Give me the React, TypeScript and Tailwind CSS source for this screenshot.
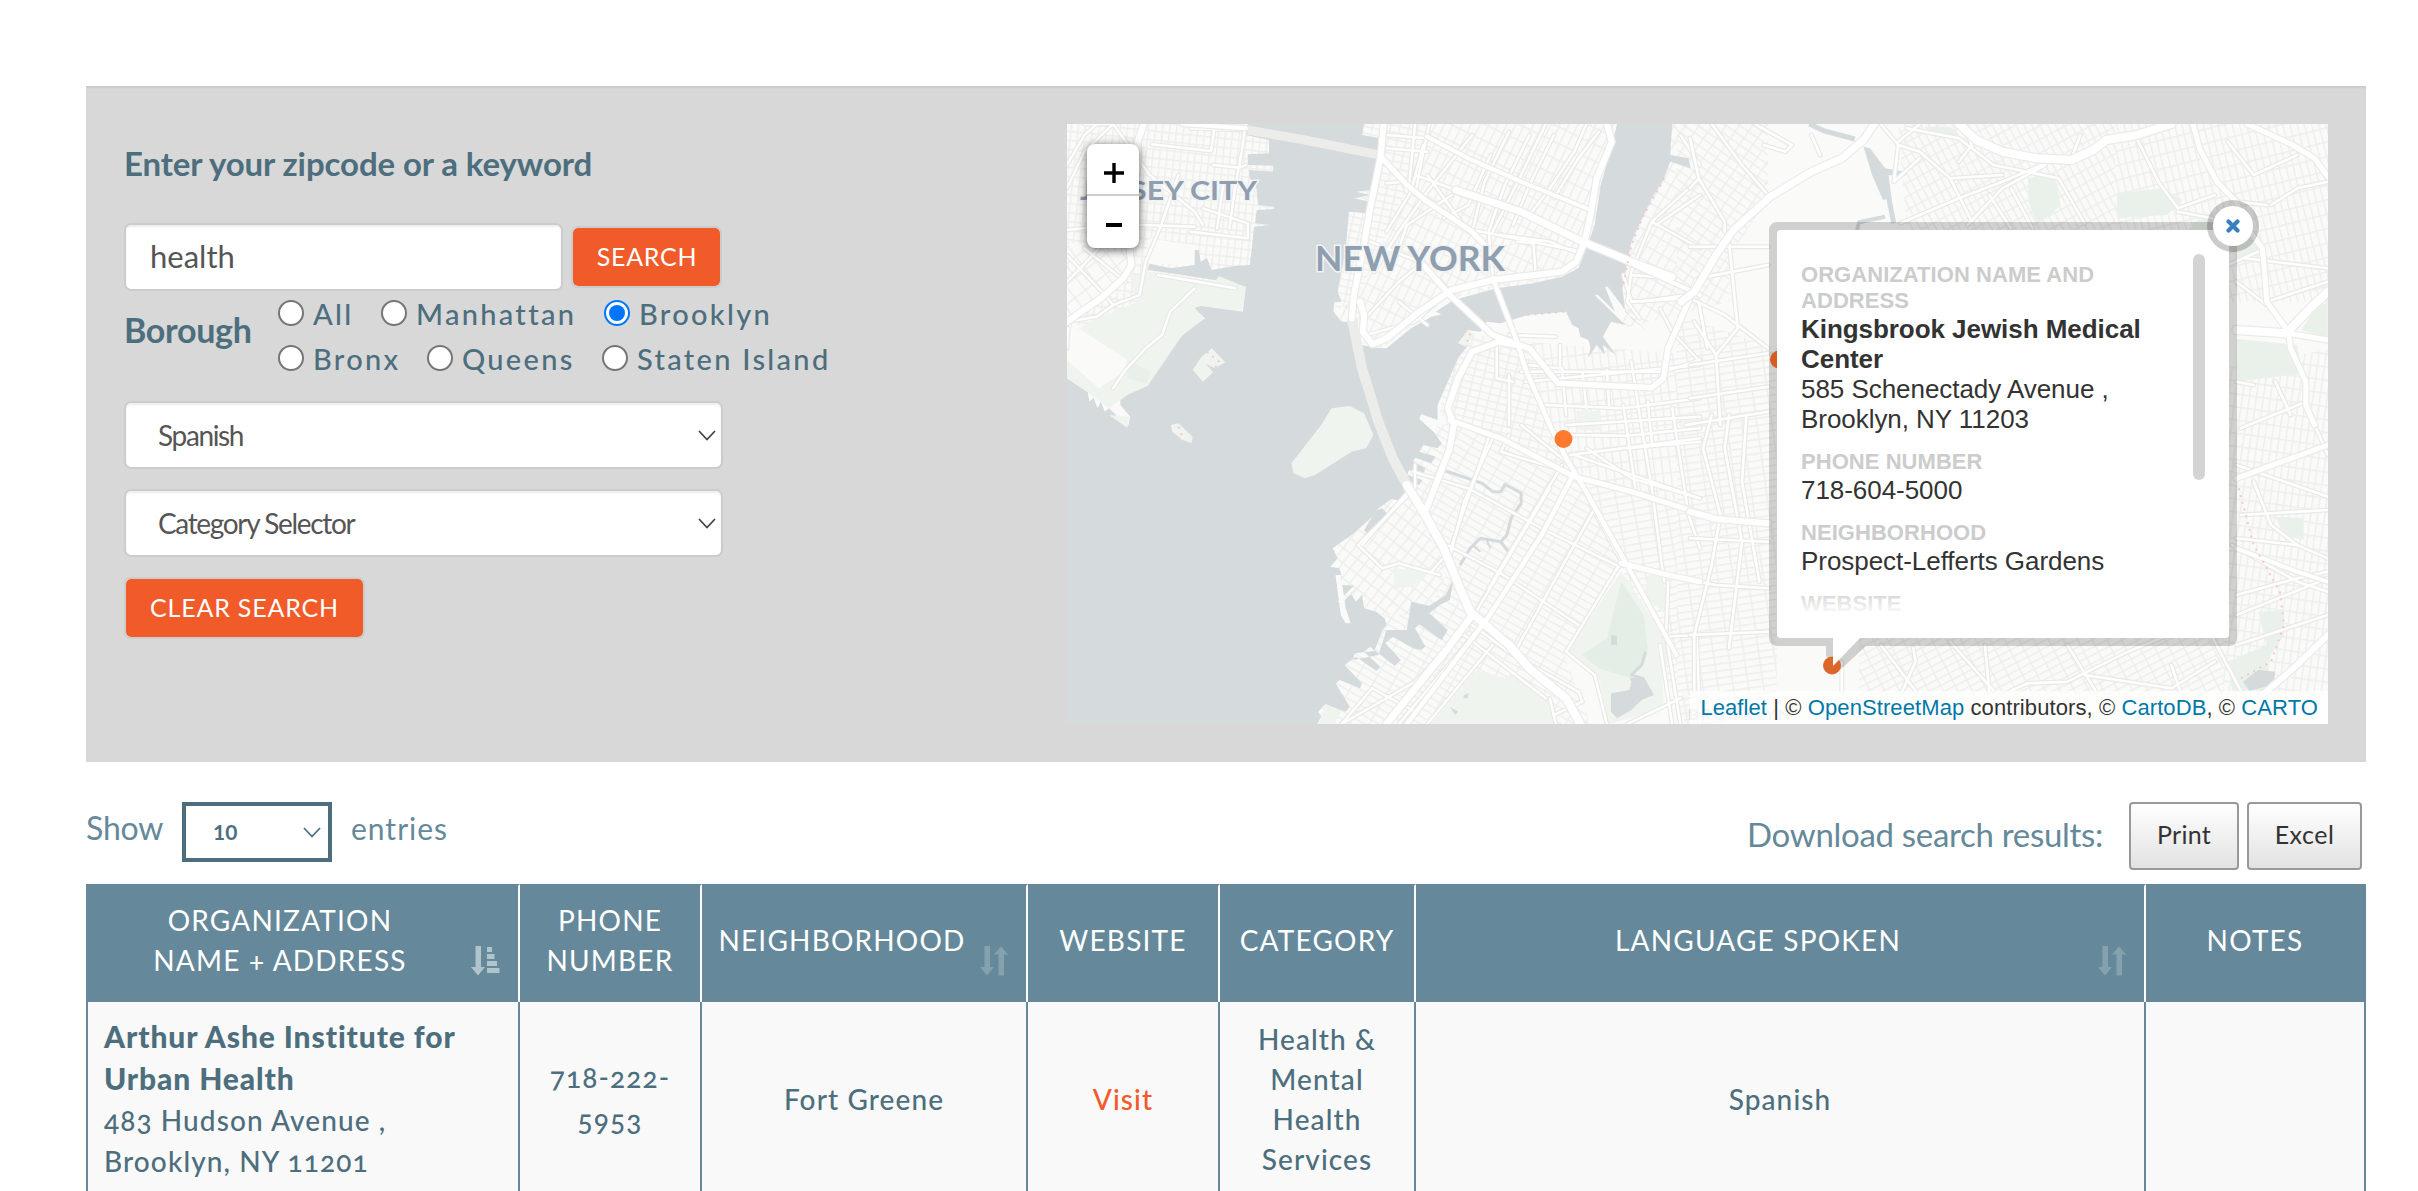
import type { ReactNode } from "react";

type Pt = [number, number];

const parse = (s: string): Pt[] => s.split(" ").map((p) => p.split(",").map(Number) as Pt);

/* West and east tiles of the map use their own survey grids. */
const west = (s: string) =>
  parse(s).map(([u, v]) => `${(1060 + u / 2.45).toFixed(1)},${(115 + v / 3).toFixed(1)}`).join(" ");
const east = (s: string) =>
  parse(s).map(([u, v]) => `${(1690 + u / 2.306).toFixed(1)},${(115 + v / 3).toFixed(1)}`).join(" ");

type Road = { p: string; w: number };

const WATER =
  "455,27 455,60 512,75 512,115 460,118 460,150 522,152 522,170 462,165 465,190 480,205 485,270 525,275 525,282 482,285 478,325 515,330 475,335 470,400 465,450 430,452 372,465 360,430 345,440 340,405 330,405 330,450 270,460 220,446 215,465 300,480 382,496 388,484 396,500 455,515 448,590 345,572 328,578 355,610 300,660 250,730 215,812 195,800 165,840 148,840 148,870 172,905 168,930 150,915 120,880 110,890 100,860 92,880 82,848 72,860 68,832 17,790 17,1827 630,1827 640,1805 632,1790 650,1768 700,1790 710,1775 675,1705 685,1695 735,1720 740,1705 697,1650 725,1625 775,1668 785,1655 745,1610 760,1595 820,1653 835,1635 797,1585 815,1565 865,1600 885,1605 895,1595 870,1540 880,1528 935,1575 950,1545 905,1495 930,1470 955,1455 965,1390 945,1440 905,1472 860,1460 868,1400 850,1545 800,1545 780,1620 718,1635 722,1615 770,1608 790,1545 800,1530 795,1510 775,1490 745,1480 740,1440 725,1460 712,1435 735,1410 690,1465 680,1460 720,1412 690,1410 690,1385 685,1360 662,1355 680,1330 668,1300 720,1255 765,1205 745,1245 760,1270 805,1200 790,1180 775,1185 812,1152 845,1160 865,1135 835,1105 843,1095 880,1110 888,1095 850,1080 855,1065 890,1080 895,1060 865,1040 870,1028 910,1045 920,1025 880,1010 890,990 925,1000 935,985 915,950 880,912 885,898 925,915 925,870 950,800 975,730 1000,690 975,685 1000,645 1030,650 1045,620 1080,625 1145,600 1240,590 1255,630 1270,640 1275,665 1295,675 1300,700 1293,730 1315,690 1335,720 1330,690 1362,720 1330,665 1350,620 1385,630 1310,540 1318,540 1360,590 1335,515 1342,515 1400,610 1440,650 1385,590 1378,520 1390,440 1400,380 1430,300 1450,250 1480,190 1495,140 1545,160 1540,130 1495,120 1500,27 1365,27 1350,100 1325,210 1310,330 1290,400 1270,460 1230,485 1160,505 1070,520 965,555 920,590 935,598 910,605 860,640 800,700 770,698 740,690 715,620 690,620 670,590 672,562 690,560 680,530 700,400 708,290 755,295 758,260 720,250 760,240 725,230 762,225 780,130 785,70 740,60 745,27";

const PARKS_W = [
  "170,480 215,470 380,500 390,484 455,516 447,588 345,572 328,580 355,610 300,660 215,812 165,840 120,880 68,832 17,790 17,735 95,820 165,765 165,735 45,640 100,605 190,560",
  "640,930 665,880 710,873 745,895 768,960 750,1000 715,1010 625,1080 600,1090 572,1075 567,1045",
  "325,765 350,800 375,772 358,748 380,760 405,742 372,700 345,728",
  "272,930 290,925 325,965 322,985 300,975 275,950",
  "120,900 170,905 165,938",
  "1375,1370 1500,1600 1475,1690 1480,1780 1345,1827 1320,1690 1240,1615",
  "1020,1665 1090,1690 1110,1670 1200,1750 1210,1827 910,1827",
  "820,1360 900,1370 880,1400 860,1415 815,1420",
  "1000,645 1015,655 995,695 975,685",
  "1265,888 1325,888 1325,945 1270,945",
  "1440,1380 1480,1380 1485,1500 1430,1440",
  "650,1768 690,1790 670,1827 635,1827",
];

const PARKS_E = [
  "780,190 840,175 855,270 830,300 800,325 780,260",
  "985,235 1090,220 1135,255 1100,300 985,310",
  "1471,560 1440,580 1410,645 1471,668",
  "1260,672 1400,690 1412,775 1330,790 1260,800",
  "540,35 600,35 620,60 560,62",
  "1260,330 1310,380 1310,420 1260,430",
  "1350,1205 1415,1210 1415,1275 1370,1260",
  "1310,1490 1370,1485 1370,1560 1330,1640 1350,1727 1250,1727 1240,1640 1330,1590",
  "1165,320 1205,300 1205,345 1150,345",
];

const LAKES_W = [
  "1350,1735 1395,1725 1400,1700 1395,1690 1430,1685 1455,1740 1425,1755 1400,1785 1365,1810 1350,1790",
  "1350,1560 1365,1562 1365,1590 1350,1590",
  "990,1740 1002,1735 998,1750 988,1748",
  "955,1775 975,1790 968,1800",
];

const CREEKS_W: Road[] = [
  { p: "945,1068 1035,1105 1060,1130 1080,1130 1090,1108 1130,1135 1130,1165 1105,1210 1095,1260 1080,1280 1030,1270 1005,1300 980,1350", w: 3 },
  { p: "1080,1280 1098,1310", w: 3 },
  { p: "1045,1275 1055,1300", w: 2 },
  { p: "1010,1290 1030,1310", w: 2 },
  { p: "1435,1610 1425,1650 1400,1680 1425,1690", w: 3 },
];
const CREEKS_E: Road[] = [
  { p: "275,27 310,48 380,72", w: 5 },
  { p: "452,180 460,260 470,325", w: 5 },
  { p: "385,345 390,322 450,305", w: 4 },
];

const GRIDS: { id: string; rot: number; w: number; h: number; poly: string; side: "w" | "e" }[] = [
  { id: "nj", rot: 6, w: 7, h: 9, side: "w", poly: "17,27 560,27 540,500 17,640" },
  { id: "njs", rot: -38, w: 13, h: 16, side: "w", poly: "17,380 180,420 160,500 17,620" },
  { id: "man", rot: 26, w: 8, h: 15, side: "w", poly: "740,27 1370,27 1300,480 950,550 780,710 660,620" },
  { id: "vil", rot: 12, w: 9, h: 7, side: "w", poly: "740,27 900,27 850,220 740,520 670,600" },
  { id: "slope", rot: 30, w: 17, h: 7, side: "w", poly: "650,1050 960,920 1260,1085 1380,1350 1235,1620 1300,1827 600,1827" },
  { id: "bh", rot: 14, w: 10, h: 7, side: "w", poly: "950,640 1140,690 1200,930 1240,1070 960,915 930,900" },
  { id: "hook", rot: 38, w: 9, h: 12, side: "w", poly: "650,1100 850,1130 950,1370 900,1500 660,1500" },
  { id: "bed", rot: -7, w: 8, h: 16, side: "w", poly: "1140,680 1568,720 1640,1220 1260,1085 1200,930" },
  { id: "wms", rot: 30, w: 9, h: 13, side: "w", poly: "1380,27 1640,27 1640,560 1380,640" },
  { id: "crown", rot: -10, w: 16, h: 7, side: "w", poly: "1260,1085 1640,1220 1640,1850 1540,1850 1370,1340" },
  { id: "e1", rot: -8, w: 15, h: 7, side: "e", poly: "-30,600 200,700 200,1740 -30,1740" },
  { id: "e2", rot: 35, w: 11, h: 8, side: "e", poly: "-30,27 180,27 180,250 20,560 -30,560" },
  { id: "e3", rot: 62, w: 12, h: 7, side: "e", poly: "480,27 980,27 980,345 500,345" },
  { id: "e4", rot: -14, w: 7, h: 14, side: "e", poly: "980,27 1490,27 1490,560 1220,560 1100,345 980,345" },
  { id: "e5", rot: 8, w: 7, h: 13, side: "e", poly: "1220,760 1490,700 1490,1740 1220,1740" },
  { id: "e6", rot: -27, w: 13, h: 7, side: "e", poly: "390,1560 1230,1560 1230,1740 390,1740" },
];

const MINOR_W: Road[] = [
  "17,150 60,60 90,27", "60,27 130,27 220,180 240,200 330,290 350,330", "225,88 370,108 380,27", "320,40 450,45",
  "455,27 445,110 430,210 415,340", "375,150 440,158 455,150", "400,210 385,340", "350,280 460,325 460,370 320,350",
  "130,27 60,110 17,220", "17,345 130,330 200,330 330,335", "290,180 245,340 210,440 195,540 130,570 90,605 17,620",
  "17,420 110,540 130,570", "110,380 50,460", "60,400 160,500", "50,460 17,500", "20,640 17,700",
  "330,520 270,590 250,660 210,700 160,765 130,820", "240,480 430,520",
  "800,205 840,200 850,230", "870,27 855,215 1010,345 1280,410", "890,90 860,230 800,350", "905,27 890,110 870,240",
  "1010,60 900,230 830,350 770,470", "1055,120 1000,270 940,310", "1100,50 1040,200 1010,350", "1150,60 1090,210 1050,350 1060,480",
  "1190,27 1130,180 1060,350", "1210,60 1150,210 1110,330", "1290,27 1260,110 1200,220 1150,300", "1320,50 1270,130 1210,250",
  "870,180 970,225 1080,270", "960,240 850,330 830,400", "900,180 1000,350", "800,60 900,70", "800,100 900,110",
  "1120,380 1160,385 1165,470", "1080,360 1200,380 1270,415", "760,380 880,440 950,520", "830,560 900,630", "740,620 830,500 890,440",
  "950,530 870,620 750,660", "1225,690 1225,760 1150,750", "1100,660 1215,665", "1130,770 1480,770 1568,735",
  "1140,800 1568,750", "1190,870 1380,880 1568,850", "1240,930 1568,905", "1250,960 1390,962 1568,940", "1250,1020 1568,970",
  "1230,760 1240,900", "1280,770 1290,880", "1340,765 1345,870", "1400,740 1420,900 1450,1120 1480,1400", "1380,870 1410,1120",
  "1500,880 1540,1200 1568,1300", "1440,860 1450,980", "1100,780 1100,930", "1070,700 1070,790 1110,800",
  "1470,580 1500,650 1568,740", "1568,190 1450,320 1400,470 1390,560 1420,610", "1568,240 1460,330", "1450,320 1568,400",
  "1400,480 1500,490", "1420,560 1540,540", "1380,480 1400,560 1540,550", "1520,60 1568,150",
  "865,1070 1000,1120 1180,1240 1370,1355", "940,1285 1080,1375 1270,1530", "1050,970 960,1290", "1060,970 990,1160 950,1350",
  "1100,960 1080,1010 1240,1070", "1130,930 1260,1060", "1230,1050 1050,1420", "1310,1180 1110,1620",
  "1200,1120 1000,1530", "1370,1350 1240,1610 1310,1680 1340,1827", "1000,1540 870,1700 690,1827", "1040,1520 830,1827",
  "1060,1590 900,1827", "1010,1530 1110,1620 1270,1730 1280,1760 1210,1800", "990,1560 1190,1750", "870,1050 870,1120 730,1290 790,1360 830,1345 930,1380",
  "860,1120 740,1290", "960,1300 910,1370", "1390,1000 1568,980", "1260,1020 1568,1150", "1290,1000 1400,1090 1568,1150",
  "1380,1350 1300,1170", "1490,1400 1485,1560 1520,1827", "1480,1565 1568,1560", "1470,1590 1500,1827", "1560,1560 1568,1827",
  "1520,1750 1390,1827", "765,1720 870,1790", "765,1720 690,1827", "1200,1750 1215,1827",
].map((p) => ({ p, w: 2.4 }));

const MAJOR_W: Road[] = [
  { p: "205,27 190,80 190,150 175,260 170,400 175,450 155,490 100,550 17,620", w: 6 },
  { p: "300,27 455,40", w: 4 },
  { p: "793,27 785,130 760,280 740,420 720,540 715,610", w: 6 },
  { p: "1340,27 1352,80 1315,190 1300,300 1285,380 1265,440 1230,470 1060,495 960,525 880,590 800,670 765,688 742,650 745,600 735,560", w: 6 },
  { p: "900,65 1000,130 1130,200 1300,285", w: 4 },
  { p: "790,130 850,210 900,260 1010,350 1040,390", w: 5 },
  { p: "970,225 1130,290 1280,380 1410,445 1500,485", w: 7 },
  { p: "890,450 955,540 1060,660 1150,700 1220,805 1450,818 1478,790 1490,700 1560,500", w: 5.5 },
  { p: "1060,490 1120,680 1140,760 1200,930 1240,1030 1280,1110 1380,1330", w: 4.5 },
  { p: "1380,1330 1510,1620", w: 4 },
  { p: "1120,690 1075,680 1010,710 975,790 950,880 965,930 955,1000 895,1190", w: 6 },
  { p: "850,1110 895,1200 940,1300 980,1420 1005,1490 1100,1590 1150,1660 1240,1750 1275,1827", w: 8 },
  { p: "1010,1500 950,1600 800,1827", w: 7 },
  { p: "955,915 1080,970 1260,1085 1400,1130 1568,1195", w: 5 },
  { p: "1255,1085 1180,1260 1050,1505 850,1827", w: 4.5 },
  { p: "1375,1345 1490,1380 1568,1400", w: 5 },
  { p: "1280,380 1568,540", w: 4 },
];

const MINOR_E: Road[] = [
  "50,27 120,150 180,240", "0,70 20,190 0,220", "20,190 80,320 80,350", "150,27 235,90 220,110 170,90", "280,60 300,120",
  "0,395 180,395", "20,490 180,450", "0,550 80,600 180,700", "0,750 180,715", "0,850 180,815", "90,380 110,640 60,720 70,930",
  "10,620 60,720", "20,560 40,700", "-10,930 180,890", "50,900 30,1000 70,1200 50,1350 10,1560 10,1727", "90,900 80,1000 120,1280 90,1600",
  "0,1270 180,1280", "130,900 120,1100 160,1400", "0,1560 180,1550", "0,1395 60,1410 180,1420",
  "440,27 480,90 530,110 600,190 650,320", "480,90 470,200 530,130", "500,40 620,70 700,150 850,190", "640,60 650,90 620,140",
  "485,325 620,250 720,200 820,145", "640,330 720,220 820,150", "600,190 720,180", "740,220 790,340", "690,240 740,340", "850,190 910,325",
  "530,27 480,80", "1030,70 1080,200 1125,280", "900,60 880,130", "1125,280 1210,240", "1125,290 1205,310", "1340,270 1400,220 1471,200",
  "1260,260 1330,270", "1240,80 1300,180 1400,120", "1280,430 1471,460", "1240,450 1310,410", "1330,560 1471,500", "1260,500 1330,570",
  "1260,800 1300,810", "1385,900 1350,800", "1270,940 1420,860", "1430,900 1471,1020", "1260,1050 1471,1145", "1270,1200 1471,1185",
  "1250,1290 1400,1400 1471,1430", "1260,1270 1400,1290 1471,1330", "1260,1440 1400,1390 1471,1370", "1260,1500 1471,1390",
  "1300,1100 1340,1230 1400,1290", "515,1600 520,1640 490,1727", "440,1590 520,1727", "870,1590 935,1727", "1190,1530 1270,1727",
  "740,1727 780,1705 870,1700 1010,1610 1120,1550", "910,1680 1110,1720 1210,1640", "680,1590 690,1727", "1110,1650 1130,1727",
  "350,1640 350,1727", "600,1580 700,1727", "1260,1590 1471,1500",
].map((p) => ({ p, w: 2.6 }));

const MAJOR_E: Road[] = [
  { p: "425,27 400,75 350,130 280,170 185,245 100,345 60,420 10,530 -20,560", w: 7 },
  { p: "620,27 660,75 720,110 800,130 880,135 930,105 960,75 1030,60 1110,27", w: 8 },
  { p: "1285,27 1390,90 1440,130 1471,185", w: 5 },
  { p: "1160,27 1175,100 1215,200 1260,260 1280,330 1320,400 1325,470 1330,560 1380,650 1385,700 1420,800 1420,870 1440,930", w: 5 },
  { p: "1471,530 1430,580 1375,655 1260,645", w: 8 },
  { p: "1380,655 1471,675", w: 5 },
  { p: "0,1190 60,1212 180,1225", w: 6 },
  { p: "1471,990 1260,1090", w: 5 },
  { p: "1471,1560 1400,1650 1320,1740", w: 6 },
  { p: "1260,1300 1400,1370 1471,1400", w: 4 },
];

function Roads({ roads, project, casing }: { roads: Road[]; project: (s: string) => string; casing: string }) {
  return (
    <g fill="none" strokeLinejoin="round" strokeLinecap="round">
      {roads.map((r) => (
        <polyline key={"c" + r.p} points={project(r.p)} stroke={casing} strokeWidth={r.w + 2.4} />
      ))}
      {roads.map((r) => (
        <polyline key={r.p} points={project(r.p)} stroke="#ffffff" strokeWidth={r.w} />
      ))}
    </g>
  );
}

function MapCanvas() {
  return (
    <svg viewBox="1067 124 1261 600" className="block h-full w-full" aria-hidden="true">
      <defs>
        {GRIDS.map((g) => (
          <pattern key={g.id} id={g.id} width={g.w} height={g.h} patternUnits="userSpaceOnUse" patternTransform={`rotate(${g.rot})`}>
            <rect width={g.w} height={g.h} fill="#fafaf8" />
            <path d={`M0 .7H${g.w}M.7 0V${g.h}`} stroke="#eeeeed" strokeWidth="1.4" />
          </pattern>
        ))}
      </defs>
      <rect x="1067" y="124" width="1261" height="600" fill="#fafaf8" />
      {GRIDS.map((g) => (
        <polygon key={g.id} points={(g.side === "w" ? west : east)(g.poly)} fill={`url(#${g.id})`} />
      ))}
      <polygon points={west("215,370 330,390 330,450 215,445")} fill="#fafaf8" />
      <polygon points={west("45,640 165,735 110,820 17,740 17,650")} fill="#fafaf8" />
      <polygon points={east("300,190 390,110 430,240 450,300 380,325 330,330 260,300")} fill="#fafaf8" />
      <polygon points={west(WATER)} fill="#d5dadc" />
      <polygon points={west("675,1380 688,1380 700,1480 712,1525 700,1525 688,1500")} fill="#fafaf8" />
      {PARKS_W.map((p) => <polygon key={p} points={west(p)} fill="#eff4ee" />)}
      {PARKS_E.map((p) => <polygon key={p} points={east(p)} fill="#eaf1ea" />)}
      <polygon points={west("1375,1400 1430,1500 1440,1600 1400,1690 1320,1660 1280,1620 1340,1570")} fill="#e5eee6" />
      <polygon points={west("165,735 225,770 210,805 165,790")} fill="#e8f0e9" />
      {LAKES_W.map((p) => <polygon key={p} points={west(p)} fill="#d5dadc" />)}
      <polygon points={east("1310,1665 1350,1670 1345,1710 1290,1727 1275,1700")} fill="#d5dadc" />
      <polygon points={east("400,95 415,100 450,160 502,172 495,182 452,180 460,250 445,255 420,180")} fill="#d5dadc" />
      <g fill="none" stroke="#d5dadc" strokeLinejoin="round">
        {CREEKS_W.map((r) => <polyline key={r.p} points={west(r.p)} strokeWidth={r.w} />)}
        {CREEKS_E.map((r) => <polyline key={r.p} points={east(r.p)} strokeWidth={r.w} />)}
      </g>
      <g fill="none" stroke="#ececeb" strokeWidth="9">
        <polyline points={west("460,45 600,75 790,122")} />
        <polyline points={west("715,610 740,760 780,920 815,1030 855,1120")} strokeWidth="10" />
      </g>
      <Roads roads={MINOR_W} project={west} casing="#e9e9e8" />
      <Roads roads={MINOR_E} project={east} casing="#e9e9e8" />
      <Roads roads={MAJOR_W} project={west} casing="#ebebea" />
      <Roads roads={MAJOR_E} project={east} casing="#ebebea" />
      <g fill="none" stroke="#f2c9c9" strokeWidth="2" strokeDasharray="2 5">
        <polyline points={west("1145,600 1235,590")} />
        <polyline points={west("1480,190 1430,300 1400,390 1380,510")} />
        <polyline points={west("360,710 390,740 380,760")} />
        <polyline points={west("290,935 300,965")} />
        <polyline points={west("1005,655 995,690")} />
        <polyline points={east("1265,1120 1300,1290 1360,1430 1370,1530 1340,1640 1270,1690")} />
      </g>
      <g fontFamily="Lato, sans-serif" fontWeight="700" fill="#8f9fb0" stroke="#f2f4f4" strokeWidth="3" paintOrder="stroke">
        <text x="1315" y="270.500" fontSize="34" textLength="190" lengthAdjust="spacingAndGlyphs">NEW YORK</text>
        <text x="1080" y="199.500" fontSize="27" textLength="177" lengthAdjust="spacingAndGlyphs">JERSEY CITY</text>
        <text x="1688" y="720" fontSize="16" textLength="102" opacity=".35">BROOKLYN</text>
      </g>
      <circle cx="1563.500" cy="439" r="9" fill="#ff7a2f" />
      <circle cx="1779" cy="359.500" r="9" fill="#ff7028" />
      <path d="M1777 222H2229a8 8 0 0 1 8 8V638a8 8 0 0 1-8 8H1866L1840 670L1833 665L1826 656V646H1777a8 8 0 0 1-8-8V230a8 8 0 0 1 8-8Z" fill="#000" fillOpacity=".17" />
      <circle cx="1832" cy="665.500" r="9" fill="#dd672a" />
      <path d="M1833 636H1862L1833 666Z" fill="#fff" />
    </svg>
  );
}

function Field({ label, children }: { label: string; children?: ReactNode }) {
  return (
    <div className="mb-[15px]">
      <div className="text-[22px] leading-[26px] font-bold tracking-[0.05px] text-[#ccc] uppercase">{label}</div>
      {children && <div className="text-[26px] leading-[30px] tracking-[-0.05px] text-[#333]">{children}</div>}
    </div>
  );
}

function Popup() {
  return (
    <div className="absolute top-[106px] left-[710px] h-[408px] w-[452px] rounded-[4px] bg-white font-['Liberation_Sans',Arial,sans-serif]">
      <div className="h-[388px] w-[390px] overflow-hidden pt-[32px] pl-[24px]">
        <Field label="Organization Name and Address">
          <b>Kingsbrook Jewish Medical Center</b>
          <br />
          585 Schenectady Avenue ,<br />
          Brooklyn, NY 11203
        </Field>
        <Field label="Phone Number">718-604-5000</Field>
        <Field label="Neighborhood">Prospect-Lefferts Gardens</Field>
        <Field label="Website" />
      </div>
      <div className="absolute top-[358px] left-0 h-[28px] w-[400px] bg-gradient-to-b from-white/0 to-white" />
      <div className="absolute top-[24px] left-[416px] h-[226px] w-[12px] rounded-full bg-[#d4d4d4]" />
      <div className="absolute top-[-24px] left-[436px] flex h-[40px] w-[40px] items-center justify-center rounded-full bg-white ring-[6px] ring-black/20">
        <svg viewBox="0 0 14 14" className="h-[14px] w-[14px]">
          <path d="M2.500 2.500L11.500 11.500M11.500 2.500L2.500 11.500" stroke="#3a7fbd" strokeWidth="4.200" strokeLinecap="round" />
        </svg>
      </div>
    </div>
  );
}

function MapPanel() {
  return (
    <div className="relative h-[600px] w-[1261px] overflow-hidden bg-[#fafaf8]">
      <MapCanvas />
      <div className="absolute top-[20px] left-[20px] flex w-[52px] flex-col rounded-[8px] bg-white shadow-[0_2px_10px_rgba(0,0,0,0.65)]">
        <button className="flex h-[52px] items-center justify-center border-b-2 border-[#ccc] pt-[8px] pl-[2px]">
          <svg viewBox="0 0 20 20" className="h-[20px] w-[20px]"><path d="M10 0V20M0 10H20" stroke="#000" strokeWidth="3.400" /></svg>
        </button>
        <button className="flex h-[52px] items-center justify-center pt-[6px] pl-[2px]">
          <svg viewBox="0 0 16 4" className="h-[4px] w-[16px]"><path d="M0 2H16" stroke="#000" strokeWidth="4" /></svg>
        </button>
      </div>
      <div className="absolute right-0 bottom-0 h-[33px] bg-white/70 pr-[10px] pl-[10px] font-['Liberation_Sans',Arial,sans-serif] text-[22px] leading-[33px] tracking-[0.09px] whitespace-nowrap text-[#333]">
        <a className="text-[#0078a8]">Leaflet</a> | © <a className="text-[#0078a8]">OpenStreetMap</a> contributors, ©{" "}
        <a className="text-[#0078a8]">CartoDB</a>, © <a className="text-[#0078a8]">CARTO</a>
      </div>
      <Popup />
    </div>
  );
}

function Chevron({ className }: { className: string }) {
  return (
    <svg viewBox="0 0 18 11" className={"h-[11px] w-[18px] " + className} fill="none">
      <path d="M1 1L9 9.500L17 1" stroke="currentColor" strokeWidth="1.800" />
    </svg>
  );
}

function Radio({ label, checked, box }: { label: string; checked?: boolean; box: string }) {
  return (
    <label className={"flex items-center " + box}>
      {checked ? (
        <span className="flex h-[26px] w-[26px] shrink-0 items-center justify-center rounded-full border-2 border-[#0075ff] bg-white">
          <span className="h-[16px] w-[16px] rounded-full bg-[#0075ff]" />
        </span>
      ) : (
        <span className="h-[26px] w-[26px] shrink-0 rounded-full border-2 border-[#767676] bg-white" />
      )}
      <span className="ml-[9px] pt-[3px] text-[29px] font-medium tracking-[2.3px] whitespace-nowrap">{label}</span>
    </label>
  );
}

function Select({ value }: { value: string }) {
  return (
    <div className="mt-[20px] flex h-[68px] w-[599px] items-center justify-between rounded-[7px] border-2 border-[#ccc] bg-white pr-[5px] pl-[32px] text-[#555] shadow-[inset_0_2px_2px_rgba(0,0,0,0.075)]">
      <span className="text-[28px] tracking-[-1.35px]">{value}</span>
      <Chevron className="text-[#444]" />
    </div>
  );
}

function SearchForm() {
  return (
    <div className="w-[943px] text-[#4d6e7d]">
      <h2 className="mt-[19px] h-[40px] text-[33px] leading-[40px] font-bold tracking-[-0.1px] whitespace-nowrap">
        Enter your zipcode or a keyword
      </h2>
      <div className="mt-[40px] flex items-center gap-[8px]">
        <div className="flex h-[68px] w-[439px] items-center rounded-[7px] border-2 border-[#ccc] bg-white pb-[2px] pl-[24px] text-[31px] text-[#555] shadow-[inset_0_2px_2px_rgba(0,0,0,0.075)]">
          health
        </div>
        <button className="h-[62px] w-[151px] rounded-[7px] border-2 border-[#ccc] bg-[#f15a29] bg-clip-padding pl-[1px] text-[25px] tracking-[0.7px] text-white">
          SEARCH
        </button>
      </div>
      <div className="mt-[-1px] flex h-[91px]">
        <div className="w-[154px] pt-[20px] text-[34px] leading-[40px] font-bold tracking-[-0.3px]">Borough</div>
        <div>
          <div className="flex h-[45px]">
            <Radio label="All" box="w-[103px]" />
            <Radio label="Manhattan" box="w-[223px]" />
            <Radio label="Brooklyn" checked box="w-[200px]" />
          </div>
          <div className="flex h-[45px]">
            <Radio label="Bronx" box="w-[149px]" />
            <Radio label="Queens" box="w-[175px]" />
            <Radio label="Staten Island" box="w-[240px]" />
          </div>
        </div>
      </div>
      <Select value="Spanish" />
      <Select value="Category Selector" />
      <button className="mt-[20px] h-[62px] w-[241px] rounded-[7px] border-2 border-[#ccc] bg-[#f15a29] bg-clip-padding text-[25px] tracking-[0.8px] whitespace-nowrap text-white">
        CLEAR SEARCH
      </button>
    </div>
  );
}

function SortBoth() {
  return (
    <svg viewBox="0 0 28 30" className="h-[30px] w-[28px]" fill="#84a1ae">
      <path d="M4.500 0H10V21H14L7 29.500L0 21H4.500Z" />
      <path d="M18.500 29.500H24V8.500H28L21 0.500L14 8.500H18.500Z" />
    </svg>
  );
}

function SortAsc() {
  return (
    <svg viewBox="0 0 29 30" className="h-[30px] w-[29px]" fill="#b1c3cb">
      <path d="M4.500 0H10V21H14L7 29.500L0 21H4.500Z" />
      <path d="M16 1H21V6H16ZM16 8H23.500V13H16ZM16 15H26V20H16ZM16 22H28.500V27H16Z" />
    </svg>
  );
}

function Th({ children, box = "", sort }: { children: ReactNode; box?: string; sort?: ReactNode }) {
  return (
    <th className={"relative h-[118px] border-t-2 border-r-2 border-t-[#65899a] border-r-white bg-[#65899a] p-0 pb-[9px] align-middle text-[28px] leading-[40px] font-normal tracking-[1.2px] whitespace-nowrap text-white last:border-r-[#65899a] " + box}>
      {children}
      {sort && <span className="absolute right-[18px] bottom-[26px]">{sort}</span>}
    </th>
  );
}

function Td({ children, box = "text-center leading-[40px]" }: { children?: ReactNode; box?: string }) {
  return (
    <td className={"h-[193px] border-r-2 border-[#65899a] bg-[#f9f9f9] p-0 align-middle text-[28px] font-medium tracking-[1.1px] " + box}>{children}</td>
  );
}

export default function App() {
  return (
    <div className="h-[1191px] w-[2418px] overflow-hidden bg-white pt-[86px] pl-[86px] font-[Lato,'Open_Sans',sans-serif]">
      <section className="flex h-[676px] w-[2280px] bg-[#d8d8d8] p-[38px] shadow-[inset_0_2px_2px_rgba(0,0,0,0.06)]">
        <SearchForm />
        <MapPanel />
      </section>

      <div className="mt-[40px] mb-[14px] flex h-[68px] w-[2280px] items-start justify-between text-[#65899a]">
        <div className="flex items-start">
          <span className="w-[96px] text-[32px] leading-[52px] tracking-[-0.2px]">Show</span>
          <div className="flex h-[60px] w-[150px] items-center justify-between border-4 border-[#4d6e7d] bg-white pr-[7px] pl-[27px] text-[21px] font-bold text-[#4d6e7d]">
            10
            <Chevron className="text-[#4d6e7d]" />
          </div>
          <span className="pl-[19px] text-[30px] leading-[52px] tracking-[1px]">entries</span>
        </div>
        <div className="flex items-start pr-[4px]">
          <span className="pr-[26px] text-[33px] leading-[65px] tracking-[-0.3px] whitespace-nowrap">Download search results:</span>
          <button className="h-[68px] w-[110px] rounded-[4px] border-2 border-[#999] bg-gradient-to-b from-white to-[#e2e2e2] pb-[2px] text-[25px] tracking-[0.3px] text-[#333]">
            Print
          </button>
          <button className="ml-[8px] h-[68px] w-[115px] rounded-[4px] border-2 border-[#999] bg-gradient-to-b from-white to-[#e2e2e2] pb-[2px] text-[25px] tracking-[0.5px] text-[#333]">
            Excel
          </button>
        </div>
      </div>

      <table className="w-[2280px] table-fixed border-separate border-spacing-0 text-[#4d6e7d] oldstyle-nums">
        <colgroup>
          <col className="w-[434px]" />
          <col className="w-[182px]" />
          <col className="w-[326px]" />
          <col className="w-[192px]" />
          <col className="w-[196px]" />
          <col className="w-[730px]" />
          <col className="w-[220px]" />
        </colgroup>
        <thead>
          <tr>
            <Th box="pr-[44px]" sort={<SortAsc />}>ORGANIZATION<br />NAME + ADDRESS</Th>
            <Th>PHONE<br />NUMBER</Th>
            <Th box="pr-[44px]" sort={<SortBoth />}>NEIGHBORHOOD</Th>
            <Th>WEBSITE</Th>
            <Th>CATEGORY</Th>
            <Th box="pr-[44px]" sort={<SortBoth />}>LANGUAGE SPOKEN</Th>
            <Th>NOTES</Th>
          </tr>
        </thead>
        <tbody>
          <tr>
            <Td box="border-l-2 text-left leading-[41px] whitespace-nowrap">
              <div className="pl-[16px]">
                <strong className="text-[30px] font-black tracking-[0.9px]">
                  Arthur Ashe Institute for<br />Urban Health
                </strong>
                <br />
                483 Hudson Avenue ,<br />
                Brooklyn, NY 11201
              </div>
            </Td>
            <Td box="text-center leading-[43px]">718-222-<br />5953</Td>
            <Td>Fort Greene</Td>
            <Td><a className="text-[#f15a29]">Visit</a></Td>
            <Td>Health &amp;<br />Mental<br />Health<br />Services</Td>
            <Td>Spanish</Td>
            <Td />
          </tr>
        </tbody>
      </table>
    </div>
  );
}
